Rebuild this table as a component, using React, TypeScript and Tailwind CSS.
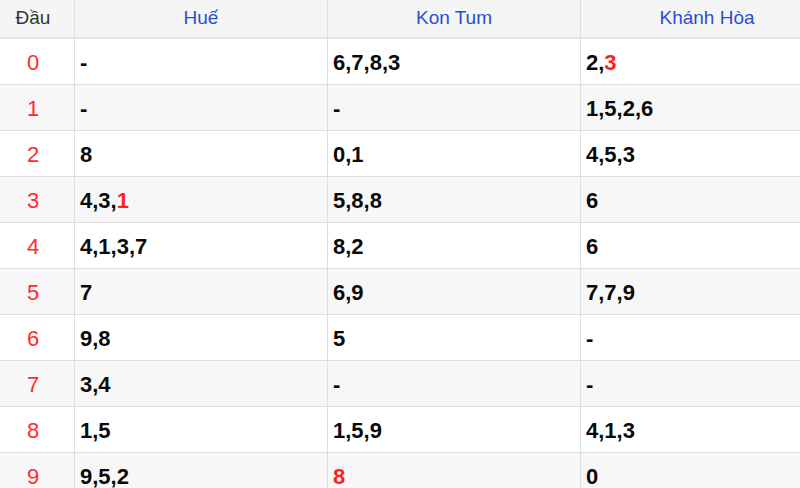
const rows: { d: string; cells: (string | [string, string])[] }[] = [
  { d: "0", cells: ["-", "6,7,8,3", ["2,", "3"]] },
  { d: "1", cells: ["-", "-", "1,5,2,6"] },
  { d: "2", cells: ["8", "0,1", "4,5,3"] },
  { d: "3", cells: [["4,3,", "1"], "5,8,8", "6"] },
  { d: "4", cells: ["4,1,3,7", "8,2", "6"] },
  { d: "5", cells: ["7", "6,9", "7,7,9"] },
  { d: "6", cells: ["9,8", "5", "-"] },
  { d: "7", cells: ["3,4", "-", "-"] },
  { d: "8", cells: ["1,5", "1,5,9", "4,1,3"] },
  { d: "9", cells: ["9,5,2", ["", "8"], "0"] },
];

const headers = ["Huế", "Kon Tum", "Khánh Hòa"];

function Cell({ v }: { v: string | [string, string] }) {
  if (typeof v === "string") return <>{v}</>;
  return (
    <>
      {v[0]}
      <span className="text-[#ff1f1f]">{v[1]}</span>
    </>
  );
}

export default function App() {
  return (
    <div className="w-[800px] h-[488px] overflow-hidden bg-white font-['Liberation_Sans',Arial,sans-serif]">
      <div className="w-[832px]">
        {/* header */}
        <div className="flex h-[39px] bg-[#f5f5f5] border-b-2 border-[#e6e6e6]">
          <div className="w-[75px] shrink-0 flex items-center justify-center pr-[8px] border-r border-[#dedede] text-[19px] text-[#333]">
            Đầu
          </div>
          {headers.map((h) => (
            <div
              key={h}
              className="w-[253px] shrink-0 flex items-center justify-center border-r border-[#dedede] text-[19px] text-[#2b4fcf]"
            >
              {h}
            </div>
          ))}
        </div>

        {rows.map((r, i) => (
          <div
            key={r.d}
            className={`flex h-[46px] border-b border-[#dedede] ${i % 2 === 1 ? "bg-[#f7f7f7]" : "bg-white"}`}
          >
            <div className="w-[75px] shrink-0 flex items-center justify-center pr-[8px] pt-[1px] border-r border-[#dedede] text-[22px] text-[#ff2b2b]">
              {r.d}
            </div>
            {r.cells.map((c, j) => (
              <div
                key={j}
                className="w-[253px] shrink-0 flex items-center pl-[5px] pt-[1px] border-r border-[#dedede] text-[22px] font-bold text-[#0a0a0a]"
              >
                <Cell v={c} />
              </div>
            ))}
          </div>
        ))}
      </div>
    </div>
  );
}
